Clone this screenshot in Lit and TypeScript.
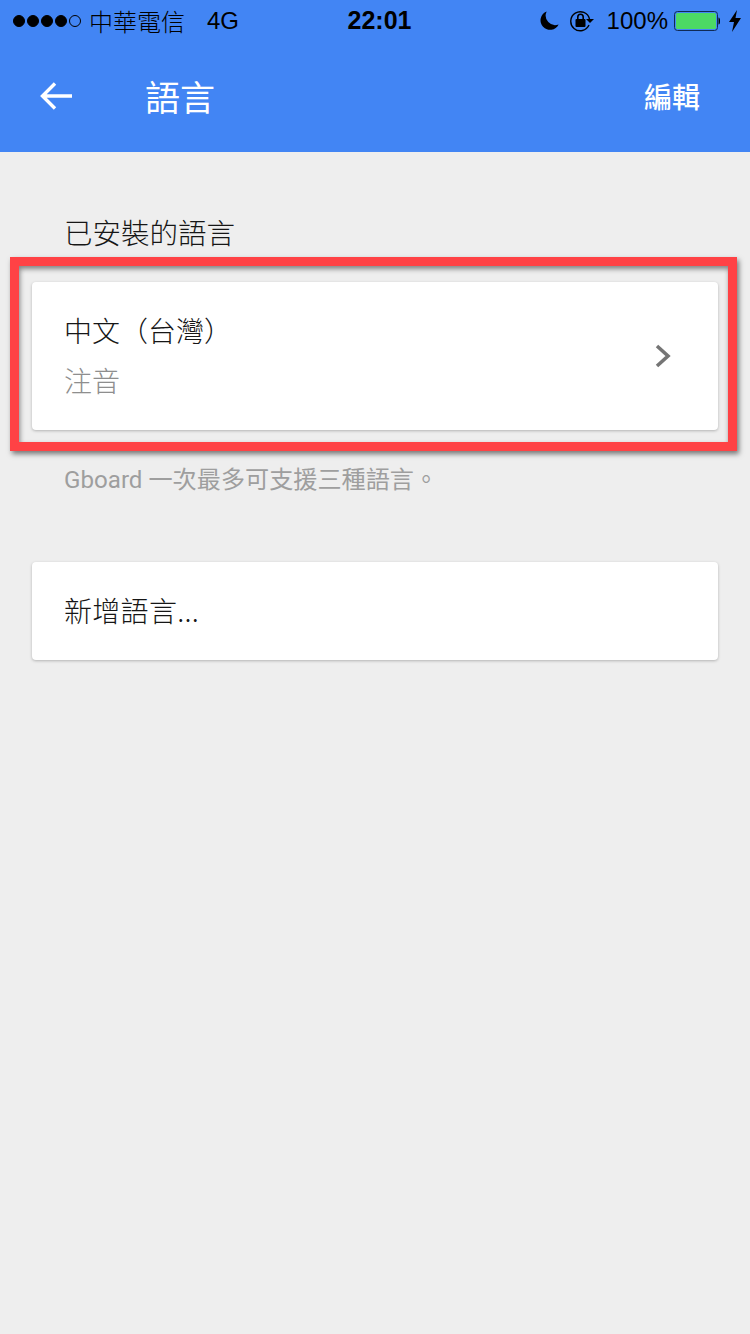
import { LitElement, html, css } from "lit";
import { customElement } from "lit/decorators.js";

@customElement("app-root")
export class AppRoot extends LitElement {
    static styles = css`
        :host {
            display: block;
            position: relative;
            width: 750px;
            height: 1334px;
            overflow: hidden;
            background-color: #eeeeee;
            color: #161616;
            font-family: "Roboto", "Noto Sans CJK TC", sans-serif;
        }

        header {
            height: 152px;
            box-sizing: border-box;
            background-color: #4285f4;
        }

        .status {
            display: grid;
            grid-template-columns: 1fr auto 1fr;
            align-items: center;
            height: 40px;
            padding: 1px 9px 0 13px;
            box-sizing: border-box;
            color: #000;
            font-family: "Liberation Sans", "Noto Sans CJK TC", sans-serif;
            font-size: 24px;
        }

        .status-left, .status-right {
            display: flex;
            align-items: center;
        }

        .status-right {
            justify-content: flex-end;
        }

        .dots {
            display: flex;
            gap: 2px;
            margin-right: 8px;
        }

        .dot {
            box-sizing: border-box;
            width: 12px;
            height: 12px;
            border-radius: 50%;
            border: 1px solid #000;
            background-color: #000;
        }

        .dot.empty {
            background-color: transparent;
        }

        .carrier {
            font-family: "Noto Sans CJK TC", sans-serif;
            font-size: 24px;
            font-weight: 300;
            margin-right: 22px;
        }

        .time {
            margin-left: 5px;
            font-size: 25px;
            font-weight: 700;
        }

        .moon { margin-right: 11px; }
        .lock { margin-right: 13px; }
        .percent { margin-right: 6px; font-size: 24px; }
        .battery { margin-right: 9px; }

        .bar {
            display: flex;
            align-items: center;
            height: 112px;
            padding: 0 50px 0 40px;
            color: #fff;
            font-family: "Noto Sans CJK TC", sans-serif;
        }

        .back {
            width: 32px;
            height: 32px;
            margin-right: 73px;
        }

        .title {
            flex: 1;
            font-size: 35px;
            font-weight: 400;
            line-height: 44px;
        }

        .edit {
            font-size: 28px;
            font-weight: 500;
        }

        main {
            padding: 60px 32px 0;
            font-family: "Noto Sans CJK TC", sans-serif;
            font-weight: 300;
        }

        .heading {
            margin: 0 0 30px 32px;
            font-size: 28.500px;
            font-weight: 300;
            line-height: 40px;
        }

        .card {
            border-radius: 4px;
            background-color: #fff;
            box-shadow: 0 1px 3px rgba(0, 0, 0, 0.25);
        }

        .language {
            display: flex;
            align-items: center;
            justify-content: space-between;
            height: 148px;
            box-sizing: border-box;
            padding: 0 47px 0 32px;
        }

        .name {
            font-size: 28px;
            line-height: 40px;
            margin-bottom: 10px;
        }

        .method {
            font-size: 28px;
            line-height: 40px;
            margin-bottom: 3px;
            color: #8e8e8e;
        }

        .hint {
            margin: 34px 0 66px 32px;
            font-size: 24.150px;
            font-weight: 400;
            line-height: 32px;
            color: #9e9e9e;
            font-family: "Roboto", "Noto Sans CJK TC", sans-serif;
        }

        .add {
            display: flex;
            align-items: center;
            height: 96px;
            padding: 0 32px 2px;
            font-size: 28px;
            letter-spacing: 0.300px;
        }

        /* annotation drawn over the screenshot */
        .highlight {
            position: absolute;
            left: 10px;
            top: 257px;
            width: 727px;
            height: 194px;
            box-sizing: border-box;
            border: 9px solid #ff4245;
            box-shadow: 2px 3px 5px rgba(0, 0, 0, 0.5), inset 1px 3px 5px rgba(0, 0, 0, 0.45);
        }
    `;

    render() {
        return html`
            <header>
                <div class="status">
                    <div class="status-left">
                        <div class="dots">
                            <span class="dot"></span><span class="dot"></span><span class="dot"></span><span class="dot"></span><span class="dot empty"></span>
                        </div>
                        <span class="carrier">中華電信</span>
                        <span>4G</span>
                    </div>
                    <div class="time">22:01</div>
                    <div class="status-right">
                        <svg class="moon" width="19" height="19" viewBox="0 0 20 20"><path d="M7 0.500a10 10 0 1 0 12.600 13.600a10 10 0 0 1 -12.600 -13.600z" fill="#000"/></svg>
                        <svg class="lock" width="24" height="22" viewBox="0 0 24 22">
                            <path d="M19 15a9.500 9.500 0 1 1 0.500 -6" fill="none" stroke="#000" stroke-width="1.400"/>
                            <path d="M16 9h8l-4 4z" fill="#000"/>
                            <rect x="5.500" y="9" width="10" height="8" rx="1" fill="#000"/>
                            <path d="M7.800 9V7a2.700 2.700 0 0 1 5.400 0v2" fill="none" stroke="#000" stroke-width="1.600"/>
                        </svg>
                        <span class="percent">100%</span>
                        <svg class="battery" width="46" height="20" viewBox="0 0 46 20">
                            <rect x="0.500" y="0.500" width="43" height="19" rx="3" fill="none" stroke="#102a55"/>
                            <rect x="2" y="2" width="40" height="16" rx="1.500" fill="#4cd964"/>
                            <path d="M44.500 6.500a1.500 3.500 0 0 1 0 7z" fill="#000"/>
                        </svg>
                        <svg width="12" height="22" viewBox="0 0 12 22"><path d="M8 0L0 12h5l-2 10 9-14H6.500z" fill="#000"/></svg>
                    </div>
                </div>
                <div class="bar">
                    <svg class="back" viewBox="0 0 32 32"><path d="M32 16H3M15 3.500L2.500 16 15 28.500" fill="none" stroke="#fff" stroke-width="3.400"/></svg>
                    <span class="title">語言</span>
                    <span class="edit">編輯</span>
                </div>
            </header>
            <main>
                <h2 class="heading">已安裝的語言</h2>
                <div class="card language">
                    <div>
                        <div class="name">中文（台灣）</div>
                        <div class="method">注音</div>
                    </div>
                    <svg width="16" height="24" viewBox="0 0 16 24"><path d="M2 2l11 10L2 22" fill="none" stroke="#757575" stroke-width="3.600"/></svg>
                </div>
                <p class="hint">Gboard 一次最多可支援三種語言。</p>
                <div class="card add">新增語言...</div>
            </main>
            <div class="highlight"></div>
        `;
    }
}
